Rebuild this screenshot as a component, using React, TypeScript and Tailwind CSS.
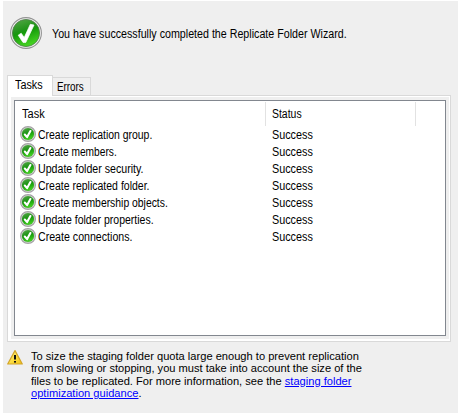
const tasks = [
  { name: 'Create replication group.', fit: 'scale-x-[0.87]' },
  { name: 'Create members.', fit: 'scale-x-[0.85]' },
  { name: 'Update folder security.', fit: 'scale-x-[0.885]' },
  { name: 'Create replicated folder.', fit: 'scale-x-[0.875]' },
  { name: 'Create membership objects.', fit: 'scale-x-[0.865]' },
  { name: 'Update folder properties.', fit: 'scale-x-[0.875]' },
  { name: 'Create connections.', fit: 'scale-x-[0.885]' },
];

function SuccessIcon({ large = false }: { large?: boolean }) {
  const id = large ? 'green-large' : 'green-small';
  return (
    <svg viewBox="0 0 32 32" className={large ? 'block size-8 shrink-0' : 'block size-4 shrink-0'}>
      <defs>
        <linearGradient id={id} x1="0" y1="0" x2="0.35" y2="1">
          <stop offset="0" stopColor="#5aa84c" />
          <stop offset="0.45" stopColor="#23951b" />
          <stop offset="0.55" stopColor="#159a0b" />
          <stop offset="1" stopColor="#42cf20" />
        </linearGradient>
      </defs>
      <circle cx="16" cy="16" r={large ? 15.4 : 14.8} fill="#f3f3f3" stroke={large ? '#929292' : '#a5a1a5'} strokeWidth={large ? 1.1 : 2.4} />
      <circle cx="16" cy="16" r={large ? 13.6 : 12.2} fill={`url(#${id})`} stroke={large ? '#4d7b48' : '#438d3b'} strokeWidth="0.8" />
      {large ? (
        <path d="M8.2 18.2 L11.2 16.2 L14.2 20.6 L20.3 7.3 L24 8 L15.8 25.4 L13 25.4 Z" fill="#fff" stroke="#fff" strokeWidth="0.7" strokeLinejoin="round" />
      ) : (
        <path d="M9.6 17 L14.2 22.2 L20.8 10" fill="none" stroke="#fff" strokeWidth="4.2" strokeLinecap="round" strokeLinejoin="round" />
      )}
    </svg>
  );
}

function WarningIcon() {
  return (
    <svg viewBox="0 0 16 16" className="block size-4 shrink-0">
      <defs>
        <linearGradient id="warning" x1="0" y1="0" x2="1" y2="1">
          <stop offset="0" stopColor="#fff39a" />
          <stop offset="0.55" stopColor="#fbdc3f" />
          <stop offset="1" stopColor="#eebf13" />
        </linearGradient>
      </defs>
      <path d="M8 1.6 L15.3 15 H.7 Z" fill="url(#warning)" stroke="#d3a52a" strokeWidth="1.2" strokeLinejoin="round" />
      <rect x="7" y="6" width="2" height="4.5" fill="#111" />
      <rect x="7" y="12" width="2" height="1.6" fill="#111" />
    </svg>
  );
}

export default function App() {
  return (
    <div className="h-[413px] w-[459px] overflow-hidden bg-white pt-px pr-px pl-[3px] font-['Liberation_Sans',Arial,sans-serif] text-[12px] text-black">
      <main className="flex h-[412px] flex-col bg-[#efefef] pr-[7px] pl-1">
        <header className="flex h-[74px] shrink-0 items-start gap-[10px] pt-4 pl-[3px]">
          <SuccessIcon large />
          <h1 className="origin-left scale-x-[0.89] pt-[9px] leading-4 font-normal whitespace-nowrap">
            You have successfully completed the Replicate Folder Wizard.
          </h1>
        </header>
        <div className="z-10 -mb-px flex h-[21px] shrink-0 items-end">
          <div className="h-[21px] w-[46px] border border-b-0 border-[#d9d9d9] bg-white pt-px pl-[7px] leading-4">
            <span className="inline-block origin-left scale-x-[0.9]">Tasks</span>
          </div>
          <div className="h-[19px] w-[38px] border border-l-0 border-[#d9d9d9] pt-px pl-1 leading-4">
            <span className="inline-block origin-left scale-x-[0.82]">Errors</span>
          </div>
        </div>
        <section className="h-[247px] w-[444px] shrink-0 border border-[#d9d9d9] bg-white pt-px pr-px pb-[2px] pl-[3px]">
          <div className="h-full bg-[#efefef] p-[3px]">
            <div className="h-full border border-[#82878f] bg-white">
              <div className="flex h-[25px] pt-px leading-[25px]">
                <div className="w-[251px] border-r border-[#e2e2e2] pl-[7px]">
                  <span className="inline-block origin-left scale-x-[0.92]">Task</span>
                </div>
                <div className="w-[150px] border-r border-[#e2e2e2] pl-[6px]">
                  <span className="inline-block origin-left scale-x-[0.87]">Status</span>
                </div>
              </div>
              {tasks.map((task) => (
                <div key={task.name} className="flex h-[17px] items-start pl-[5px] leading-[19px]">
                  <SuccessIcon />
                  <div className="w-[236px] pl-[1.5px] whitespace-nowrap">
                    <span className={`inline-block origin-left ${task.fit}`}>{task.name}</span>
                  </div>
                  <span className="origin-left scale-x-[0.9]">Success</span>
                </div>
              ))}
            </div>
          </div>
        </section>
        <footer className="flex gap-[8px] pt-[7px]">
          <WarningIcon />
          <p className="origin-left scale-x-[0.966] pt-px text-[11.5px] leading-[12.4px] whitespace-nowrap">
            <span className="block">To size the staging folder quota large enough to prevent replication</span>
            <span className="block">from slowing or stopping, you must take into account the size of the</span>
            <span className="block">files to be replicated. For more information, see the <a className="text-[#0000ff] underline">staging folder</a></span>
            <span className="block"><a className="text-[#0000ff] underline">optimization guidance</a>.</span>
          </p>
        </footer>
      </main>
    </div>
  );
}
